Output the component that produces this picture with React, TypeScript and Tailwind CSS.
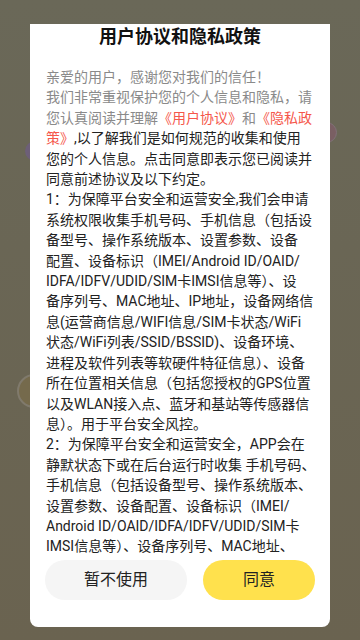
import React from "react";

const gray = "text-[#8a8a8a]";
const red = "text-[#f5574b]";
const dark = "text-[#222222]";

const lines: string[] = [
  "您的个人信息。点击同意即表示您已阅读并",
  "同意前述协议及以下约定。",
  "1：为保障平台安全和运营安全,我们会申请",
  "系统权限收集手机号码、手机信息（包括设",
  "备型号、操作系统版本、设置参数、设备",
  "配置、设备标识（IMEI/Android ID/OAID/",
  "IDFA/IDFV/UDID/SIM卡IMSI信息等）、设",
  "备序列号、MAC地址、IP地址，设备网络信",
  "息(运营商信息/WIFI信息/SIM卡状态/WiFi",
  "状态/WiFi列表/SSID/BSSID)、设备环境、",
  "进程及软件列表等软硬件特征信息）、设备",
  "所在位置相关信息（包括您授权的GPS位置",
  "以及WLAN接入点、蓝牙和基站等传感器信",
  "息）。用于平台安全风控。",
  "2：为保障平台安全和运营安全，APP会在",
  "静默状态下或在后台运行时收集 手机号码、",
  "手机信息（包括设备型号、操作系统版本、",
  "设置参数、设备配置、设备标识（IMEI/",
  "Android ID/OAID/IDFA/IDFV/UDID/SIM卡",
  "IMSI信息等）、设备序列号、MAC地址、",
];

export default function App() {
  return (
    <div
      className="relative w-[360px] h-[640px] overflow-hidden bg-gradient-to-b from-[#6a6858] to-[#6a6350]"
      style={{ fontFamily: "Roboto, 'Noto Sans CJK SC', sans-serif" }}
    >
      {/* faint background content under the overlay */}
      <div className="absolute left-[25px] top-[141px] w-[20px] h-[20px] rounded-full bg-[#6d5f78]" />
      <div className="absolute left-[316px] top-[122px] w-[21px] h-[21px] rounded-full bg-[#7a5f63] border border-[#807178]" />
      <div className="absolute left-[17px] top-[374px] w-[36px] h-[34px] rounded-full bg-[#756a4c] border-2 border-[#807a6c]" />

      <div className="relative flex justify-center pt-[24px]">
        <div className="w-[300px] h-[603px] bg-white rounded-b-[8px] flex flex-col">
          <div className="h-[26px] leading-[26px] text-center text-[18px] font-bold text-[#111111]">
            用户协议和隐私政策
          </div>
          <div className="mt-[17px] h-[486px] overflow-hidden px-4 text-[14px] leading-[20.4px] whitespace-nowrap">
            <div className={gray}>亲爱的用户，感谢您对我们的信任！</div>
            <div className={gray}>我们非常重视保护您的个人信息和隐私，请</div>
            <div>
              <span className={gray}>您认真阅读并理解</span>
              <span className={red}>《用户协议》</span>
              <span className={gray}>和</span>
              <span className={red}>《隐私政</span>
            </div>
            <div>
              <span className={red}>策》</span>
              <span className={dark}>,以了解我们是如何规范的收集和使用</span>
            </div>
            {lines.map((l, i) => (
              <div key={i} className={dark}>
                {l}
              </div>
            ))}
          </div>
          <div className="mt-[7px] flex gap-[16px] px-[15px]">
            <button className="w-[142px] h-[40px] rounded-full bg-[#f5f5f5] text-[16px] text-[#222222]">
              暂不使用
            </button>
            <button className="w-[112px] h-[40px] rounded-full bg-[#ffe14d] text-[16px] text-[#222222]">
              同意
            </button>
          </div>
        </div>
      </div>
    </div>
  );
}
